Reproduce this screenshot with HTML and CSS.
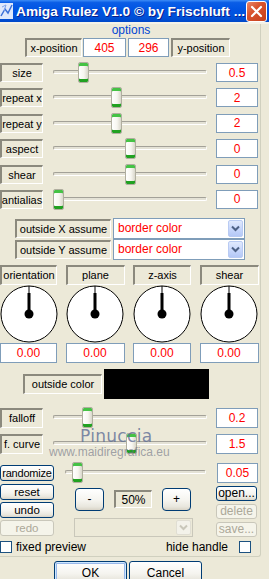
FILE: index.html
```html
<!DOCTYPE html>
<html lang="en">
<head>
    <meta charset="UTF-8">
    <meta name="viewport" content="width=device-width, initial-scale=1.0">
    <title>Amiga Rulez V1.0</title>
    <link rel="stylesheet" href="styles.css">
</head>
<body>
    <div class="window">
        <div class="titlebar">
            <svg class="app-icon" width="14" height="20" viewBox="0 0 14 20">
                <rect x="0" y="2" width="13" height="16" fill="#dfe8fb"/>
                <path d="M1 15 L5 8 L8 12 L12 4" stroke="#3a6fd8" stroke-width="1.5" fill="none"/>
                <path d="M2 6 L6 4 L4 10" stroke="#7fa3ea" stroke-width="1" fill="none"/>
            </svg>
            <span class="title">Amiga Rulez V1.0 © by Frischluft ...</span>
            <div class="close">
                <svg width="13" height="13" viewBox="0 0 13 13">
                    <path d="M2 2 L11 11 M11 2 L2 11" stroke="#fff" stroke-width="2.2" stroke-linecap="round"/>
                </svg>
            </div>
        </div>

        <div class="group">
            <div class="legend">options</div>

            <div class="pos-row">
                <div class="lbl lbl-xpos">x-position</div>
                <div class="field f-xpos">405</div>
                <div class="field f-ypos">296</div>
                <div class="lbl lbl-ypos">y-position</div>
            </div>

            <div class="sliders">
                <div class="srow">
                    <div class="lbl lbl-s">size</div>
                    <div class="slider"><div class="track"></div><div class="thumb" style="left:25px"></div></div>
                    <div class="field val">0.5</div>
                </div>
                <div class="srow">
                    <div class="lbl lbl-s">repeat x</div>
                    <div class="slider"><div class="track"></div><div class="thumb" style="left:58px"></div></div>
                    <div class="field val">2</div>
                </div>
                <div class="srow">
                    <div class="lbl lbl-s">repeat y</div>
                    <div class="slider"><div class="track"></div><div class="thumb" style="left:58px"></div></div>
                    <div class="field val">2</div>
                </div>
                <div class="srow">
                    <div class="lbl lbl-s">aspect</div>
                    <div class="slider"><div class="track"></div><div class="thumb" style="left:72px"></div></div>
                    <div class="field val">0</div>
                </div>
                <div class="srow">
                    <div class="lbl lbl-s">shear</div>
                    <div class="slider"><div class="track"></div><div class="thumb" style="left:72px"></div></div>
                    <div class="field val">0</div>
                </div>
                <div class="srow">
                    <div class="lbl lbl-s">antialias</div>
                    <div class="slider"><div class="track"></div><div class="thumb" style="left:0px"></div></div>
                    <div class="field val">0</div>
                </div>
            </div>

            <div class="outside">
                <div class="orow">
                    <div class="lbl lbl-o">outside X assume</div>
                    <div class="combo">
                        <span>border color</span>
                        <div class="combo-btn">
                            <svg width="9" height="7" viewBox="0 0 9 7"><path d="M1 1.5 L4.5 5 L8 1.5" stroke="#4d6185" stroke-width="2" fill="none"/></svg>
                        </div>
                    </div>
                </div>
                <div class="orow">
                    <div class="lbl lbl-o">outside Y assume</div>
                    <div class="combo">
                        <span>border color</span>
                        <div class="combo-btn">
                            <svg width="9" height="7" viewBox="0 0 9 7"><path d="M1 1.5 L4.5 5 L8 1.5" stroke="#4d6185" stroke-width="2" fill="none"/></svg>
                        </div>
                    </div>
                </div>
            </div>

            <div class="dials">
                <div class="lbl lbl-d">orientation</div>
                <div class="lbl lbl-d">plane</div>
                <div class="lbl lbl-d">z-axis</div>
                <div class="lbl lbl-d">shear</div>

                <svg class="dial" viewBox="0 0 58 58">
                    <circle cx="29" cy="29" r="28" fill="#fff" stroke="#000" stroke-width="1"/>
                    <line x1="29" y1="1" x2="29" y2="29" stroke="#000" stroke-width="1"/>
                    <rect x="27.5" y="8" width="3" height="21" fill="#000"/>
                    <circle cx="29" cy="29" r="4.5" fill="#000"/>
                </svg>
                <svg class="dial" viewBox="0 0 58 58">
                    <circle cx="29" cy="29" r="28" fill="#fff" stroke="#000" stroke-width="1"/>
                    <line x1="29" y1="1" x2="29" y2="29" stroke="#000" stroke-width="1"/>
                    <rect x="27.5" y="8" width="3" height="21" fill="#000"/>
                    <circle cx="29" cy="29" r="4.5" fill="#000"/>
                </svg>
                <svg class="dial" viewBox="0 0 58 58">
                    <circle cx="29" cy="29" r="28" fill="#fff" stroke="#000" stroke-width="1"/>
                    <line x1="29" y1="1" x2="29" y2="29" stroke="#000" stroke-width="1"/>
                    <rect x="27.5" y="8" width="3" height="21" fill="#000"/>
                    <circle cx="29" cy="29" r="4.5" fill="#000"/>
                </svg>
                <svg class="dial" viewBox="0 0 58 58">
                    <circle cx="29" cy="29" r="28" fill="#fff" stroke="#000" stroke-width="1"/>
                    <line x1="29" y1="1" x2="29" y2="29" stroke="#000" stroke-width="1"/>
                    <rect x="27.5" y="8" width="3" height="21" fill="#000"/>
                    <circle cx="29" cy="29" r="4.5" fill="#000"/>
                </svg>

                <div class="field dval">0.00</div>
                <div class="field dval">0.00</div>
                <div class="field dval">0.00</div>
                <div class="field dval">0.00</div>
            </div>

            <div class="color-row">
                <div class="lbl lbl-c">outside color</div>
                <div class="swatch"></div>
            </div>

            <div class="sliders sliders-f">
                <div class="srow">
                    <div class="lbl lbl-s">falloff</div>
                    <div class="slider"><div class="track"></div><div class="thumb" style="left:29px"></div></div>
                    <div class="field val">0.2</div>
                </div>
                <div class="srow">
                    <div class="lbl lbl-s">f. curve</div>
                    <div class="slider"><div class="track"></div><div class="thumb" style="left:73px"></div></div>
                    <div class="field val">1.5</div>
                </div>
            </div>

            <div class="srow rand-row">
                <div class="btn btn-side">randomize</div>
                <div class="slider slider-r"><div class="track"></div><div class="thumb" style="left:7px"></div></div>
                <div class="field val">0.05</div>
            </div>

            <div class="lower">
                <div class="col-left">
                    <div class="btn btn-side">reset</div>
                    <div class="btn btn-side">undo</div>
                    <div class="btn btn-side disabled">redo</div>
                </div>
                <div class="col-mid">
                    <div class="zoom-row">
                        <div class="btn btn-step">-</div>
                        <div class="lbl lbl-zoom">50%</div>
                        <div class="btn btn-step">+</div>
                    </div>
                    <div class="combo combo-off">
                        <span></span>
                        <div class="combo-btn">
                            <svg width="9" height="7" viewBox="0 0 9 7"><path d="M1 1.5 L4.5 5 L8 1.5" stroke="#c9c7ba" stroke-width="2" fill="none"/></svg>
                        </div>
                    </div>
                </div>
                <div class="col-right">
                    <div class="btn btn-file">open...</div>
                    <div class="btn btn-file disabled">delete</div>
                    <div class="btn btn-file disabled">save...</div>
                </div>
            </div>

            <div class="check-row">
                <div class="check"></div>
                <span class="check-text">fixed preview</span>
                <span class="check-text check-right">hide handle</span>
                <div class="check"></div>
            </div>
        </div>

        <div class="actions">
            <div class="btn btn-main btn-default">OK</div>
            <div class="btn btn-main">Cancel</div>
        </div>

        <div class="watermark">
            <div class="wm-name">Pinuccia</div>
            <div class="wm-url">www.maidiregrafica.eu</div>
        </div>
    </div>
</body>
</html>
```

FILE: styles.css
```css
body {
    margin: 0;
    background-color: #ece9d8;
    font-family: "Liberation Sans", Arial, sans-serif;
    font-size: 11px;
    color: #000;
    overflow: hidden;
}

.window {
    position: relative;
    width: 269px;
    height: 579px;
    overflow: hidden;
}

/* title bar */
.titlebar {
    display: flex;
    align-items: center;
    height: 22px;
    background: linear-gradient(180deg, #3d8cf6 0%, #0a5de6 12%, #0054e3 45%, #0050d8 80%, #0048c8 100%);
    border-bottom: 2px solid #f4f2e8;
}

.app-icon {
    flex: none;
    margin-left: 0;
}

.title {
    margin-left: 2px;
    color: #fff;
    font-weight: bold;
    font-size: 13.7px;
    white-space: nowrap;
    text-shadow: 1px 1px 0 #0a1e8a;
}

.close {
    display: flex;
    align-items: center;
    justify-content: center;
    box-sizing: border-box;
    flex: none;
    width: 21px;
    height: 21px;
    margin-left: auto;
    margin-right: 2px;
    border: 1px solid #fff;
    border-radius: 3px;
    background: linear-gradient(135deg, #e8876a 0%, #d9532e 40%, #c5401c 100%);
}

/* options group */
.group {
    width: 261px;
    height: 533px;
    box-sizing: border-box;
    border-right: 1px solid #d0d0bf;
    border-bottom: 1px solid #d0d0bf;
    border-bottom-right-radius: 3px;
}

.legend {
    height: 13px;
    line-height: 13px;
    text-align: center;
    color: #0046d5;
    font-size: 12px;
    padding-left: 2px;
}

.lbl {
    display: flex;
    align-items: center;
    justify-content: center;
    box-sizing: border-box;
    height: 19px;
    border-style: solid;
    border-width: 2px 1px 1px 2px;
    border-color: #8b897d #fff #fff #8b897d;
    white-space: nowrap;
}

.field {
    display: flex;
    align-items: center;
    justify-content: center;
    box-sizing: border-box;
    height: 19px;
    border: 1px solid #7f9db9;
    background-color: #fff;
    color: #f00;
    font-size: 12px;
}

.pos-row {
    display: flex;
    margin-top: 1px;
    padding-left: 25px;
}

.lbl-xpos {
    width: 57px;
}

.f-xpos {
    width: 43px;
    margin-left: 1px;
}

.f-ypos {
    width: 41px;
    margin-left: 2px;
}

.lbl-ypos {
    width: 59px;
    margin-left: 2px;
}

/* slider rows */
.sliders {
    display: flex;
    flex-direction: column;
    gap: 6.4px;
    margin-top: 6px;
}

.srow {
    display: flex;
    align-items: center;
    height: 19px;
}

.lbl-s {
    width: 43px;
}

.slider {
    position: relative;
    width: 154px;
    height: 21px;
    margin-left: 10px;
}

.track {
    box-sizing: border-box;
    height: 4px;
    margin-top: 8px;
    border-style: solid;
    border-width: 1px;
    border-color: #a3a198 #fff #fff #a3a198;
    border-radius: 2px;
    background-color: #e4e2d6;
}

.thumb {
    position: absolute;
    top: 0;
    box-sizing: border-box;
    width: 11px;
    height: 21px;
    border: 1px solid #b0ae9f;
    border-radius: 2px;
    background: linear-gradient(90deg, #fff 0%, #f7f6f0 55%, #d9d7cb 100%);
    box-shadow: inset 0 3px 0 #45c245, inset 0 -3px 0 #21a121;
}

.val {
    width: 42px;
    margin-left: 9px;
    height: 19px;
}

/* outside X / Y */
.outside {
    margin-top: 9px;
    padding-left: 15px;
}

.orow {
    display: flex;
    align-items: center;
    height: 21px;
}

.lbl-o {
    width: 96px;
}

.combo {
    display: flex;
    align-items: center;
    box-sizing: border-box;
    width: 132px;
    height: 21px;
    margin-left: 2px;
    padding: 1px;
    border: 1px solid #7f9db9;
    background-color: #fff;
    color: #f00;
    font-size: 12px;
}

.combo span {
    flex: 1;
    padding-left: 3px;
}

.combo-btn {
    display: flex;
    align-items: center;
    justify-content: center;
    box-sizing: border-box;
    width: 15px;
    height: 17px;
    border: 1px solid #b9cbf3;
    border-radius: 2px;
    background: linear-gradient(180deg, #e0e9fd 0%, #c5d5fb 60%, #b4c8f6 100%);
}

/* dials */
.dials {
    display: grid;
    grid-template-columns: 57px 59px 58px 59px;
    grid-template-rows: 20px 58px 20px;
    column-gap: 8.5px;
    margin-top: 5px;
}

.lbl-d {
    height: 20px;
}

.dial {
    display: block;
    width: 58px;
    height: 58px;
    justify-self: center;
}

.dval {
    height: 20px;
}

/* outside color */
.color-row {
    display: flex;
    align-items: center;
    height: 30px;
    margin-top: 6px;
    padding-left: 23px;
}

.lbl-c {
    width: 79px;
    height: 20px;
}

.swatch {
    width: 105px;
    height: 30px;
    margin-left: 2px;
    background-color: #000;
}

.sliders-f {
    gap: 6px;
    margin-top: 9px;
}

.sliders-f .srow {
    height: 20px;
}

.sliders-f .lbl,
.sliders-f .val {
    height: 20px;
}

/* buttons */
.btn {
    display: flex;
    align-items: center;
    justify-content: center;
    box-sizing: border-box;
    border: 1px solid #003c74;
    border-radius: 3px;
    background: linear-gradient(180deg, #ffffff 0%, #f5f4ef 55%, #e8e6dd 85%, #d8d3c6 100%);
    white-space: nowrap;
}

.btn.disabled {
    border-color: #c9c7ba;
    background: #f5f4ea;
    color: #aca899;
}

.rand-row {
    height: 20px;
    margin-top: 9px;
}

.btn-side {
    width: 54px;
    height: 16px;
    font-size: 11.5px;
}

.rand-row .btn-side {
    font-size: 11px;
    letter-spacing: -0.2px;
}

.slider-r {
    width: 141px;
    margin-left: 11px;
}

.rand-row .val {
    width: 41px;
    margin-left: 11px;
    height: 20px;
}

.lower {
    display: flex;
    margin-top: 1px;
}

.col-left {
    display: flex;
    flex-direction: column;
    gap: 2px;
}

.col-mid {
    display: flex;
    flex-direction: column;
    gap: 7px;
    width: 119px;
    margin-left: 20px;
    padding-top: 4px;
}

.zoom-row {
    display: flex;
    align-items: center;
    height: 23px;
    padding-left: 1px;
}

.btn-step {
    width: 29px;
    height: 23px;
    border-radius: 4px;
    font-size: 12px;
}

.lbl-zoom {
    width: 38px;
    height: 18px;
    margin: 0 10px;
    font-size: 12px;
}

.combo-off {
    width: 119px;
    height: 19px;
    margin-left: 0;
    border-color: #c9c7ba;
    background-color: #ece9d8;
}

.combo-off .combo-btn {
    height: 15px;
    border-color: #e0ded3;
    background: #f3f2ea;
}

.col-right {
    display: flex;
    flex-direction: column;
    gap: 3px;
    margin-left: 23px;
    padding-top: 2px;
}

.btn-file {
    width: 41px;
    height: 15px;
    font-size: 12px;
}

/* checkboxes */
.check-row {
    display: flex;
    align-items: center;
    height: 12px;
    margin-top: 4px;
}

.check {
    box-sizing: border-box;
    width: 12px;
    height: 12px;
    border: 1px solid #1c5180;
    background-color: #fff;
}

.check-text {
    margin-left: 4px;
    font-size: 12px;
}

.check-right {
    margin-left: auto;
    margin-right: 11px;
}

.check-row .check:last-child {
    margin-right: 9px;
}

/* dialog buttons */
.actions {
    display: flex;
    gap: 2px;
    margin-top: 4px;
    padding-left: 54px;
}

.btn-main {
    width: 73px;
    height: 23px;
    font-size: 12px;
}

.btn-default {
    box-shadow: inset 0 0 0 1px #cee7ff, inset 0 0 0 2px #98b8ea;
}

/* watermark laid over the sliders */
.watermark {
    position: absolute;
    left: 49px;
    top: 426px;
    pointer-events: none;
}

.wm-name {
    margin-left: 31px;
    font-family: "DejaVu Sans", sans-serif;
    font-size: 17px;
    letter-spacing: 0.3px;
    color: rgba(95, 110, 150, 0.8);
}

.wm-url {
    margin-top: -1px;
    font-size: 12px;
    color: rgba(115, 118, 135, 0.65);
}
```
